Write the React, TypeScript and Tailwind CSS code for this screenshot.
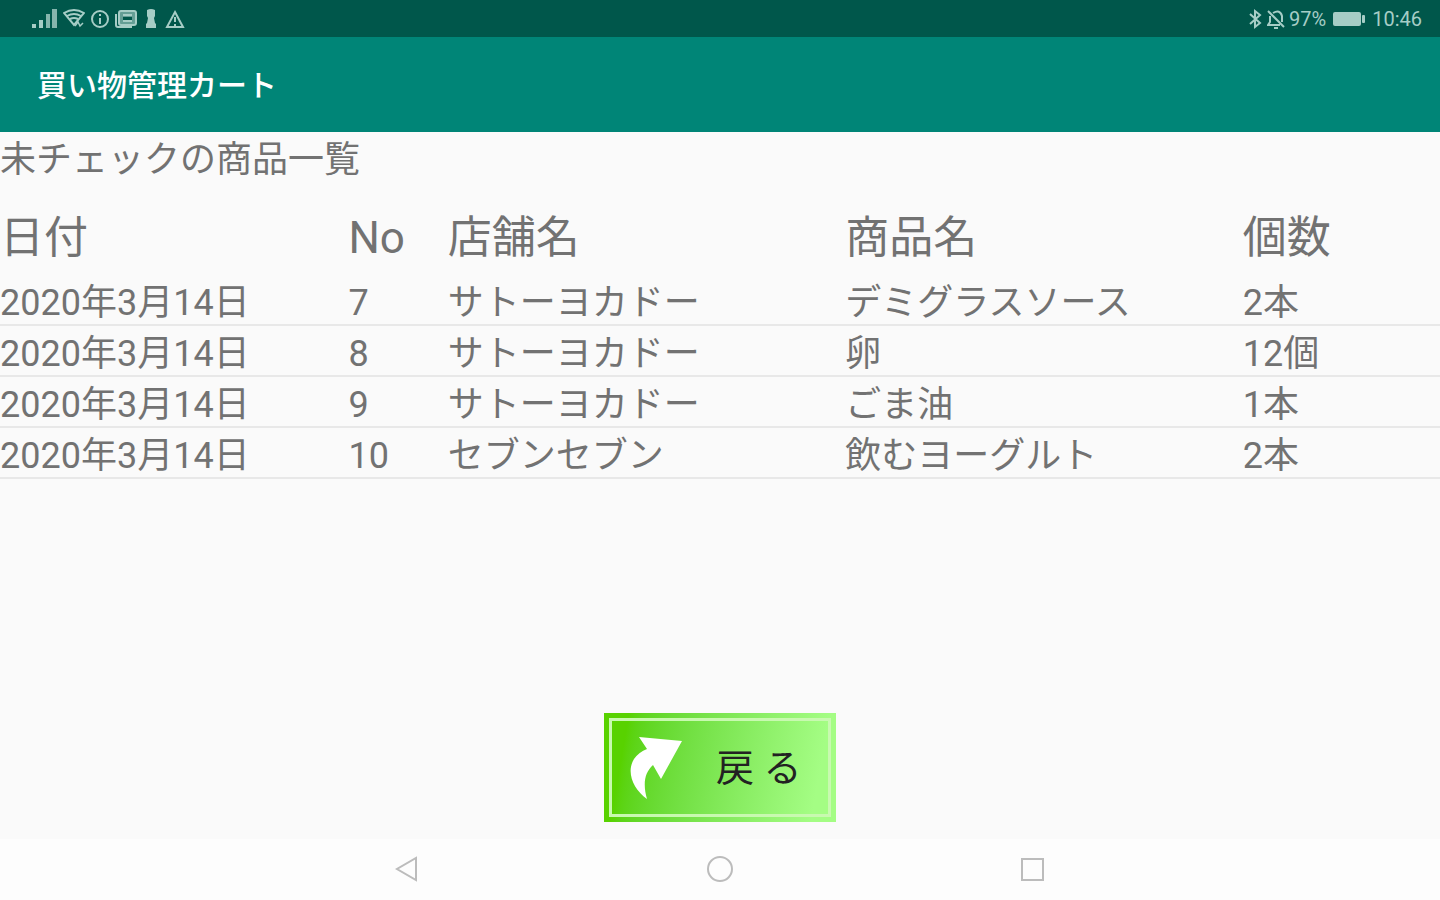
import React from 'react';

type Item = { date: string; no: number; shop: string; name: string; amount: string };

const items: Item[] = [
  { date: '2020年3月14日', no: 7, shop: 'サトーヨカドー', name: 'デミグラスソース', amount: '2本' },
  { date: '2020年3月14日', no: 8, shop: 'サトーヨカドー', name: '卵', amount: '12個' },
  { date: '2020年3月14日', no: 9, shop: 'サトーヨカドー', name: 'ごま油', amount: '1本' },
  { date: '2020年3月14日', no: 10, shop: 'セブンセブン', name: '飲むヨーグルト', amount: '2本' },
];

function SignalIcon() {
  return (
    <svg width="26" height="22" viewBox="0 0 26 22" fill="currentColor">
      <rect x="0" y="16" width="4" height="4" />
      <rect x="7" y="12" width="4" height="8" />
      <rect x="14" y="6" width="4" height="14" fillOpacity="0.8" />
      <rect x="20" y="1" width="5" height="19" fillOpacity="0.8" />
    </svg>
  );
}

function WifiIcon() {
  return (
    <svg width="22" height="22" viewBox="0 0 22 22" fill="none" stroke="currentColor" strokeWidth="2">
      <path d="M1 5Q11-1 21 5L11 17Z" />
      <path d="M4 8Q11 4 18 8M7 11Q11 9 15 11" />
      <path d="M12 18l3-4 2 4 3-3" strokeWidth="1.5" />
    </svg>
  );
}

function InfoIcon() {
  return (
    <svg width="20" height="22" viewBox="0 0 20 22" fill="none" stroke="currentColor" strokeWidth="2">
      <circle cx="10" cy="11" r="8" />
      <path d="M10 6v2M10 10v6" />
    </svg>
  );
}

function NewsIcon() {
  return (
    <svg width="22" height="22" viewBox="0 0 22 22" fill="none" stroke="currentColor" strokeWidth="2">
      <rect x="4" y="3" width="17" height="14" rx="2" fill="currentColor" fillOpacity="0.6" />
      <path d="M8 7h9M8 13h9" />
      <path d="M8 9h9v3H8z" fill="#00574b" stroke="none" />
      <path d="M1 6v11q0 2 2 2h14" />
    </svg>
  );
}

function PawnIcon() {
  return (
    <svg width="18" height="22" viewBox="0 0 18 22" fill="currentColor">
      <path d="M5 2q4-2 8 0v6l-1 2 1 5 1 1v4H4v-4l1-1 1-5-1-2z" />
    </svg>
  );
}

function WarningIcon() {
  return (
    <svg width="20" height="22" viewBox="0 0 20 22" fill="none" stroke="currentColor" strokeWidth="2">
      <path d="M10 4l8 15H2z" />
      <path d="M10 9v5M10 16v2" />
    </svg>
  );
}

function BluetoothIcon() {
  return (
    <svg width="14" height="22" viewBox="0 0 14 22" fill="none" stroke="currentColor" strokeWidth="2">
      <path d="M1 6l10 9-5 4V3l5 4-10 9" />
    </svg>
  );
}

function BellOffIcon() {
  return (
    <svg width="18" height="22" viewBox="0 0 18 22" fill="none" stroke="currentColor" strokeWidth="2">
      <path d="M1 3l16 16" />
      <path d="M6 5q7-4 9 3v6M3 8v6l-2 3h12M7 20h4" />
    </svg>
  );
}

function BatteryIcon() {
  return (
    <svg width="34" height="16" viewBox="0 0 34 16" fill="currentColor">
      <rect x="1" y="1" width="28" height="14" rx="2" />
      <rect x="30" y="4" width="3" height="8" rx="1" />
    </svg>
  );
}

function StatusBar() {
  return (
    <div className="flex h-[37px] items-center justify-between bg-[#00574b] pr-[18px] pl-8 text-[#a6cdc6]">
      <div className="flex items-center gap-[5px]">
        <SignalIcon />
        <WifiIcon />
        <InfoIcon />
        <NewsIcon />
        <PawnIcon />
        <WarningIcon />
      </div>
      <div className="flex items-center gap-1.5 text-xl leading-6">
        <div className="flex items-center gap-1">
          <BluetoothIcon />
          <BellOffIcon />
          <span>97%</span>
        </div>
        <BatteryIcon />
        <span>10:46</span>
      </div>
    </div>
  );
}

function BackButton() {
  return (
    <button
      type="button"
      className="h-[109px] w-[232px] bg-linear-100 from-[#58d200] from-10% to-[#a4fd84] to-90% p-[5px]"
    >
      <span className="flex h-full items-center border-3 border-[#c8f9b0] pl-[18px]">
        <svg width="54" height="64" viewBox="0 0 54 64" fill="#fff">
          <path d="M9 1L52 5L31 43L23 29C14 37 13 49 17 63C3 53-4 36 4 23Q9 16 17 13Z" />
        </svg>
        <span className="ml-8 text-[38px] leading-none text-[#222]">戻 る</span>
      </span>
    </button>
  );
}

function NavBar() {
  return (
    <nav className="flex h-[61px] items-center justify-center gap-[286px] bg-[#fdfdfd] text-[#bcbcbc]">
      <button type="button" aria-label="戻る">
        <svg width="26" height="28" viewBox="0 0 26 28" fill="none" stroke="currentColor" strokeWidth="2">
          <path d="M22 2v22L3 13z" />
        </svg>
      </button>
      <button type="button" aria-label="ホーム">
        <svg width="28" height="28" viewBox="0 0 28 28" fill="none" stroke="currentColor" strokeWidth="2">
          <circle cx="14" cy="13" r="12" />
        </svg>
      </button>
      <button type="button" aria-label="履歴">
        <svg width="26" height="28" viewBox="0 0 26 28" fill="none" stroke="currentColor" strokeWidth="2">
          <rect x="2" y="3" width="21" height="21" />
        </svg>
      </button>
    </nav>
  );
}

export default function App() {
  return (
    <div
      lang="ja"
      className="flex min-h-screen flex-col bg-[#fafafa] font-['Roboto','Noto_Sans_CJK_JP',sans-serif] text-[#727272]"
    >
      <StatusBar />
      <header className="flex h-[95px] items-center bg-[#008577] px-[37px] pt-0.5">
        <h1 className="text-[30px] leading-10 font-medium text-white">買い物管理カート</h1>
      </header>
      <main className="flex flex-1 flex-col">
        <h2 className="text-4xl leading-[56px]">未チェックの商品一覧</h2>
        <table className="mt-3 w-full table-fixed border-collapse text-left">
          <colgroup>
            <col className="w-[24.2%]" />
            <col className="w-[6.9%]" />
            <col className="w-[27.6%]" />
            <col className="w-[27.6%]" />
            <col />
          </colgroup>
          <thead>
            <tr className="h-[75px] text-[44px] leading-[64px]">
              <th className="p-0 font-normal">日付</th>
              <th className="p-0 font-normal">No</th>
              <th className="p-0 font-normal">店舗名</th>
              <th className="p-0 font-normal">商品名</th>
              <th className="p-0 font-normal">個数</th>
            </tr>
          </thead>
          <tbody>
            {items.map((item) => (
              <tr key={item.no} className="border-b-2 border-[#e8e8e8] text-4xl leading-10">
                <td className="p-0 pt-2 pb-px">{item.date}</td>
                <td className="p-0 pt-2 pb-px">{item.no}</td>
                <td className="p-0 pt-2 pb-px">{item.shop}</td>
                <td className="p-0 pt-2 pb-px">{item.name}</td>
                <td className="p-0 pt-2 pb-px">{item.amount}</td>
              </tr>
            ))}
          </tbody>
        </table>
        <div className="mt-auto flex justify-center pb-[17px]">
          <BackButton />
        </div>
      </main>
      <NavBar />
    </div>
  );
}
